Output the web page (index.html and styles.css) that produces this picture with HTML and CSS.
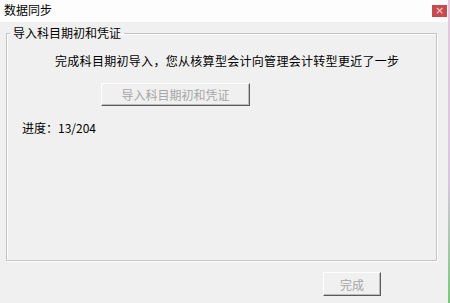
FILE: index.html
```html
<!DOCTYPE html>
<html>
<head>
<meta charset="utf-8">
<link rel="stylesheet" href="styles.css">
</head>
<body>
<div class="window">
  <div class="titlebar">
    <span class="title">数据同步</span>
    <span class="close">×</span>
  </div>
  <div class="client">
    <fieldset class="group">
      <legend class="legend">导入科目期初和凭证</legend>
      <p class="message">完成科目期初导入，您从核算型会计向管理会计转型更近了一步</p>
      <div class="btn-row">
        <button class="btn btn-import" disabled>导入科目期初和凭证</button>
      </div>
      <p class="progress">进度：13/204</p>
    </fieldset>
    <div class="footer">
      <button class="btn btn-done" disabled>完成</button>
    </div>
  </div>
  <div class="edge"></div>
</div>
</body>
</html>
```

FILE: styles.css
```css
html, body {
  margin: 0;
  padding: 0;
}
body {
  width: 450px;
  height: 303px;
  overflow: hidden;
  font-family: "Noto Sans CJK SC", "DejaVu Sans", sans-serif;
  font-size: 12px;
  color: #000;
}
.window {
  position: relative;
  width: 450px;
  height: 303px;
  display: flex;
  flex-direction: column;
  background: #f0f0f0;
}
.titlebar {
  height: 22px;
  background: #fdfdfd;
  display: flex;
  align-items: center;
  justify-content: space-between;
  padding: 0 4px 0 4px;
  flex: none;
}
.title {
  font-size: 12px;
  line-height: 14px;
  margin-top: -2px;
}
.close {
  width: 15px;
  height: 12px;
  margin-right: -1px;
  margin-top: -1px;
  background: #c8494e;
  color: #f6d8d8;
  font-size: 11px;
  line-height: 12px;
  text-align: center;
  font-family: "DejaVu Sans", sans-serif;
}
.client {
  flex: 1;
  display: flex;
  flex-direction: column;
  padding: 4px 13px 0 6px;
}
.group {
  margin: 0;
  padding: 0;
  height: 235px;
  box-sizing: border-box;
  border: 1px solid #c4c4c4;
  box-shadow: 1px 1px 0 #ffffff, inset 1px 1px 0 #ffffff;
  display: flex;
  flex-direction: column;
}
.legend {
  margin-left: 3px;
  padding: 0 3px 0 3px;
  font-size: 12px;
  line-height: 14px;
}
.message {
  margin: 13px 0 0 48px;
  font-size: 12px;
  line-height: 16px;
  letter-spacing: 0.3px;
}
.btn-row {
  margin: 14px 0 0 94px;
}
.btn {
  font-family: "Noto Sans CJK SC", "DejaVu Sans", sans-serif;
  font-size: 12px;
  color: #a6a6a6;
  background: #f0f0f0;
  border: 1px solid;
  border-color: #ffffff #5a5a5a #5a5a5a #ffffff;
  box-shadow: inset -1px -1px 0 #bcbcbc;
  padding: 0;
  margin: 0;
}
.btn-import {
  width: 149px;
  height: 23px;
  line-height: 20px;
}
.progress {
  margin: 14px 0 0 15px;
  font-size: 12px;
  line-height: 16px;
}
.footer {
  display: flex;
  justify-content: flex-end;
  padding: 11px 56px 0 0;
}
.btn-done {
  width: 58px;
  height: 24px;
  line-height: 21px;
}
.edge {
  position: absolute;
  top: 0;
  right: 0;
  width: 2px;
  height: 303px;
  background: linear-gradient(#e7c6df, #d9c5e0 60%, #78c878);
}
```
